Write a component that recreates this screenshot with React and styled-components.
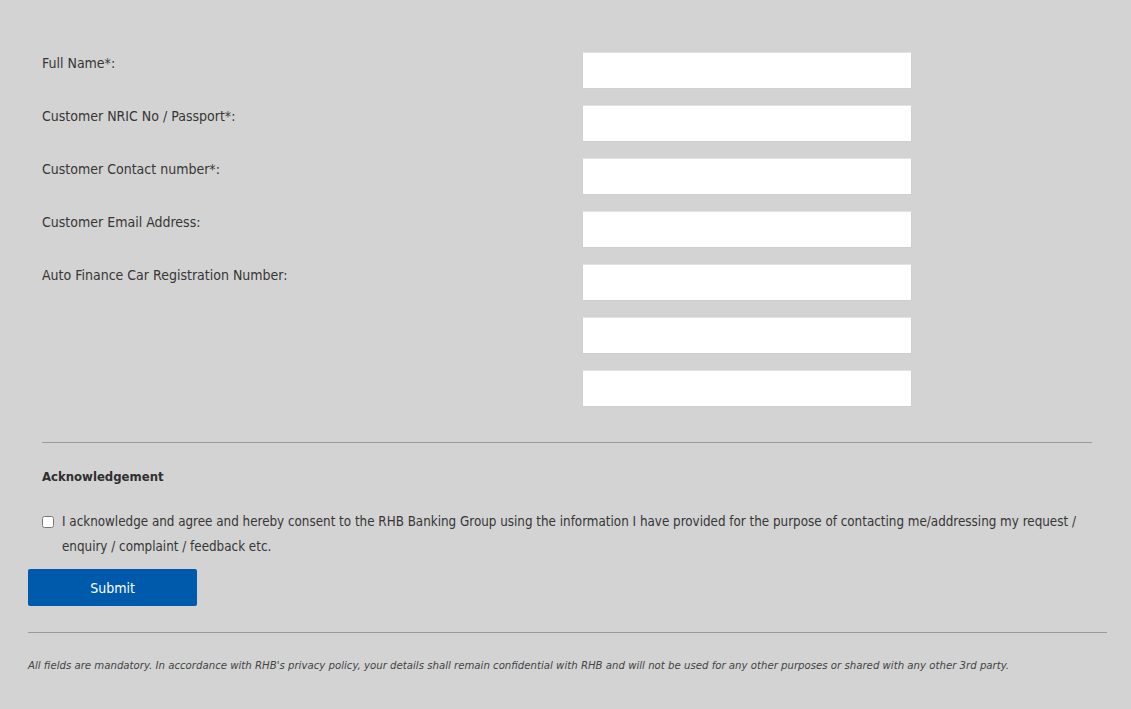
import React from "react";
import styled, { createGlobalStyle } from "styled-components";

const GlobalStyle = createGlobalStyle`
  html, body {
    margin: 0;
    padding: 0;
    background: #d3d3d3;
  }
  body {
    font-family: "DejaVu Sans Condensed", "Liberation Sans", sans-serif;
    color: #3a3a3a;
  }
`;

const Page = styled.div`
  padding: 52px 24px 20px 28px;
`;

const Section = styled.div`
  padding: 0 15px 0 14px;
`;

const FieldGrid = styled.div`
  display: grid;
  grid-template-columns: 540px 330px;
  row-gap: 16px;
`;

const Label = styled.label`
  font-size: 14px;
  line-height: 20px;
  padding-top: 1px;
  color: #363636;
`;

const Input = styled.input`
  box-sizing: border-box;
  width: 330px;
  height: 37px;
  background: #fff;
  border: 1px solid #cfcfcf;
  border-top-color: #e2e2e2;
  outline: none;
  font-family: inherit;
  font-size: 14px;
  padding: 0 8px;
`;

const Rule = styled.hr`
  border: 0;
  border-top: 1px solid #9a9a9a;
  margin: ${(p) => p.$margin || "0"};
`;

const Heading = styled.h4`
  margin: 24px 0 0;
  font-size: 13px;
  font-weight: bold;
  line-height: 20px;
  color: #2f2f2f;
`;

const Consent = styled.label`
  display: flex;
  align-items: flex-start;
  gap: 8px;
  margin-top: 22px;
  font-size: 13.3px;
  line-height: 25px;
  color: #363636;
`;

const Check = styled.input`
  margin: 7px 0 0;
  width: 12px;
  height: 12px;
  flex: none;
`;

const SubmitButton = styled.button`
  display: block;
  width: 169px;
  height: 37px;
  margin-top: 10px;
  background: #005aab;
  color: #fff;
  border: 0;
  border-radius: 2px;
  font-family: inherit;
  font-size: 14px;
`;

const Note = styled.p`
  margin: 26px 0 0;
  font-size: 11.3px;
  font-style: italic;
  color: #444;
`;

const fields = [
  "Full Name*:",
  "Customer NRIC No / Passport*:",
  "Customer Contact number*:",
  "Customer Email Address:",
  "Auto Finance Car Registration Number:",
  "",
  "",
];

export default function App() {
  return (
    <>
      <GlobalStyle />
      <Page>
        <Section>
          <FieldGrid>
            {fields.map((f, i) => (
              <React.Fragment key={i}>
                <Label>{f}</Label>
                <Input type="text" />
              </React.Fragment>
            ))}
          </FieldGrid>
          <Rule $margin="35px 0 0" />
          <Heading>Acknowledgement</Heading>
          <Consent>
            <Check type="checkbox" />
            <span>
              I acknowledge and agree and hereby consent to the RHB Banking Group using the
              information I have provided for the purpose of contacting me/addressing my request /
              enquiry / complaint / feedback etc.
            </span>
          </Consent>
        </Section>
        <SubmitButton>Submit</SubmitButton>
        <Rule $margin="26px 0 0" />
        <Note>
          All fields are mandatory. In accordance with RHB's privacy policy, your details shall
          remain confidential with RHB and will not be used for any other purposes or shared with
          any other 3rd party.
        </Note>
      </Page>
    </>
  );
}
